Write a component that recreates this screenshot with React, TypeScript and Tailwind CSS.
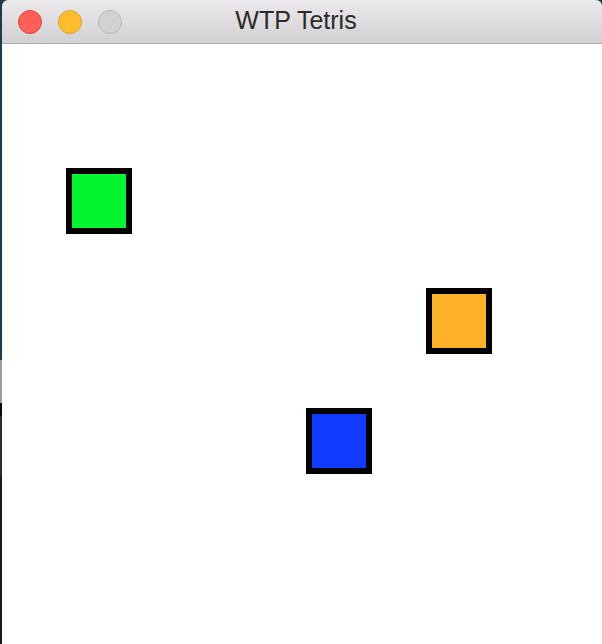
import React from 'react'

interface Block {
  id: string
  left: number
  top: number
  color: string
}

// board pieces, positions relative to the window's content area
const blocks: Block[] = [
  { id: 'green', left: 64, top: 124, color: 'bg-[#03f531]' },
  { id: 'orange', left: 424, top: 244, color: 'bg-[#ffb128]' },
  { id: 'blue', left: 304, top: 364, color: 'bg-[#113cff]' },
]

function TrafficLights() {
  return (
    <div className="flex items-center gap-[16px]">
      <span className="w-[24px] h-[24px] rounded-full bg-[#fe5f57] border border-[#e0443e]" />
      <span className="w-[24px] h-[24px] rounded-full bg-[#ffbd2e] border border-[#dea123]" />
      <span className="w-[24px] h-[24px] rounded-full bg-[#d3d2d3] border border-[#b8b7b8]" />
    </div>
  )
}

export default function App() {
  return (
    <div className="w-[602px] h-[644px] flex bg-[#1d3a4b] overflow-hidden" style={{ fontFamily: '"Liberation Sans", Arial, sans-serif' }}>
      {/* desktop peeking out on the left */}
      <div className="w-[2px] flex flex-col shrink-0">
        <div className="h-[360px] bg-[#1e3b4c]" />
        <div className="h-[43px] bg-[#9d9d9d]" />
        <div className="h-[13px] bg-[#0a0a0a]" />
        <div className="h-[60px] bg-[#2c2a2a]" />
        <div className="flex-1 bg-[#1c1b19]" />
      </div>

      {/* window */}
      <div className="flex-1 flex flex-col rounded-t-[6px] overflow-hidden">
        <div className="relative h-[44px] shrink-0 flex items-center pl-[16px] bg-gradient-to-b from-[#ebe9eb] to-[#d2d0d2] border-b border-[#aeacae]">
          <TrafficLights />
          <div className="absolute inset-0 flex items-center justify-center pr-[12px] pb-[1px] text-[25px] text-[#2a2a2a]">
            WTP Tetris
          </div>
        </div>

        <div className="relative flex-1 bg-white">
          {blocks.map((b) => (
            <div
              key={b.id}
              className={`absolute w-[66px] h-[66px] border-[6px] border-black ${b.color}`}
              style={{ left: b.left, top: b.top }}
            />
          ))}
        </div>
      </div>
    </div>
  )
}
